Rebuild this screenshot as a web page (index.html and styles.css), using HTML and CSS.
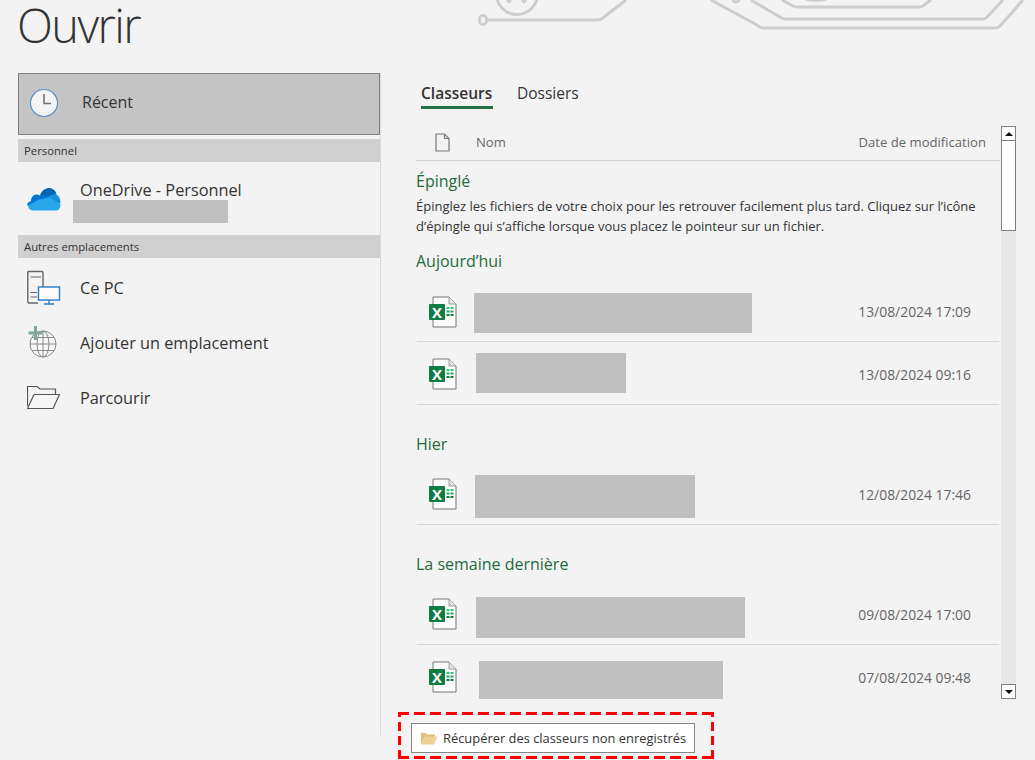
FILE: index.html
```html
<!DOCTYPE html>
<html lang="fr">
<head>
<meta charset="utf-8">
<title>Ouvrir</title>
<link rel="stylesheet" href="styles.css">
</head>
<body>
<svg class="circuit" width="595" height="40" viewBox="440 0 595 40" fill="none">
  <g stroke="#cdcdcd" stroke-width="3" stroke-linejoin="round">
    <path d="M488 20H597Q601 20 604 17L626 0"/>
    <rect x="479.500" y="15.500" width="7" height="9" rx="3.500"/>
    <circle cx="517" cy="-6" r="20.500"/>
    <path d="M711 0L757 25Q760 28 764 28H996Q998 28 1000 26L1023 0"/>
    <path d="M751 0L780 17Q782 19 785 19H983Q985 19 987 17L1003 0"/>
    <path d="M782 0L793 6Q795 7 798 7H920Q922 7 924 5L931 0"/>
    <circle cx="736" cy="-1" r="3"/>
    <path d="M800 -3Q816 4 832 -3"/>
    <path d="M507 0L509 2L511 0M522 0L524 2L526 0"/>
  </g>
</svg>

<h1 class="title">Ouvrir</h1>

<main class="layout">
  <nav class="nav">
    <a class="nav-recent">
      <svg class="ic-clock" width="30" height="30" viewBox="0 0 30 30">
        <circle cx="15" cy="15" r="13.500" fill="#f4f4f4" stroke="#5a8fcb" stroke-width="1.200"/>
        <path d="M15 6V15.500H22" fill="none" stroke="#6e6e6e" stroke-width="1.500"/>
      </svg>
      <span class="recent-label">Récent</span>
    </a>
    <div class="nav-section">Personnel</div>
    <a class="nav-onedrive">
      <svg class="ic-cloud" width="34" height="24" viewBox="0 0 34 24">
        <path d="M13 8.500C14.500 3 19 1 22 1C25.500 1 28.500 3.500 29.500 7L20 12Z" fill="#0364b8"/>
        <path d="M13 8.500C8.500 6 4 9 4 14C1.500 14.500 0 16.500 0 18.500L12 16L22 9Z" fill="#0078d4"/>
        <path d="M29 7.500C24 7 22 9 20 10.500L12 15.500L24 23L33.500 15.500C33.500 11 31 8 29 7.500Z" fill="#1490df"/>
        <path d="M12 12.500L1 18.500C1 21 3 23.500 6 23.500H29C31.500 23.500 33.500 21.500 33.500 17L22.500 10.500Z" fill="#28a8ea"/>
      </svg>
      <div class="onedrive-text">
        <span class="nav-label">OneDrive - Personnel</span>
        <div class="redact redact-account"></div>
      </div>
    </a>
    <div class="nav-section">Autres emplacements</div>
    <div class="nav-places">
      <a class="nav-item">
        <svg class="ic-place" width="36" height="36" viewBox="0 0 36 36">
          <path d="M11 33H1.500A1 1 0 0 1 .8 32V2.500A1 1 0 0 1 1.500 1.500H15A1 1 0 0 1 16 2.500V17" fill="#f4f4f4" stroke="#666" stroke-width="1.400"/>
          <path d="M3.500 7H14M3.500 22.500H10M3.500 27H10" stroke="#666" stroke-width="1"/>
          <rect x="11.500" y="17" width="21" height="13" fill="#fbfbfb" stroke="#2a7cc7" stroke-width="1.400"/>
          <path d="M22 30V34M17 34H27" stroke="#2a7cc7" stroke-width="1.300"/>
        </svg>
        <span class="nav-label">Ce PC</span>
      </a>
      <a class="nav-item">
        <svg class="ic-place" width="36" height="36" viewBox="0 0 36 36">
          <g fill="none" stroke="#8a8a8a" stroke-width="1">
            <circle cx="16" cy="19" r="13" fill="#f8f8f8"/>
            <ellipse cx="16" cy="19" rx="6" ry="13"/>
            <path d="M16 6V32M3 19H29M5 12.500H27M5 25.500H27"/>
          </g>
          <path d="M9 2H12V7.500H17.500V10.500H12V16H9V10.500H3.500V7.500H9Z" fill="#7fa99b" transform="translate(-2 -1)"/>
        </svg>
        <span class="nav-label">Ajouter un emplacement</span>
      </a>
      <a class="nav-item">
        <svg class="ic-place" width="36" height="36" viewBox="2 0 36 36">
          <path d="M2.500 26V6.500H12L15 9H30.500V14" fill="none" stroke="#555" stroke-width="1.200"/>
          <path d="M2.500 28.500H28L34.500 14.500H9Z" fill="#f6f6f6" stroke="#555" stroke-width="1.200" stroke-linejoin="round"/>
        </svg>
        <span class="nav-label">Parcourir</span>
      </a>
    </div>
  </nav>

  <section class="panel">
    <div class="tabs">
      <span class="tab tab-active">Classeurs</span>
      <span class="tab">Dossiers</span>
    </div>
    <div class="browser">
      <div class="list">
        <div class="list-head">
          <svg class="ic-file" width="15" height="19" viewBox="0 0 15 19">
            <path d="M1 1H9.500L14 5.500V18H1ZM9.500 1V5.500H14" fill="none" stroke="#777" stroke-width="1.200"/>
          </svg>
          <span class="head-name">Nom</span>
          <span class="head-date">Date de modification</span>
        </div>
        <h2 class="group group-pinned">Épinglé</h2>
        <p class="hint">Épinglez les fichiers de votre choix pour les retrouver facilement plus tard. Cliquez sur l’icône d’épingle qui s’affiche lorsque vous placez le pointeur sur un fichier.</p>
        <h2 class="group group-today">Aujourd’hui</h2>
        <div class="row row-a">
          <svg class="ic-xl" width="30" height="32"><use href="#xl"/></svg>
          <div class="redact redact-a"></div>
          <span class="date">13/08/2024 17:09</span>
        </div>
        <div class="row row-b">
          <svg class="ic-xl" width="30" height="32"><use href="#xl"/></svg>
          <div class="redact redact-b"></div>
          <span class="date">13/08/2024 09:16</span>
        </div>
        <h2 class="group group-next">Hier</h2>
        <div class="row row-c">
          <svg class="ic-xl" width="30" height="32"><use href="#xl"/></svg>
          <div class="redact redact-c"></div>
          <span class="date">12/08/2024 17:46</span>
        </div>
        <h2 class="group group-next">La semaine dernière</h2>
        <div class="row row-d">
          <svg class="ic-xl" width="30" height="32"><use href="#xl"/></svg>
          <div class="redact redact-d"></div>
          <span class="date">09/08/2024 17:00</span>
        </div>
        <div class="row row-e">
          <svg class="ic-xl" width="30" height="32"><use href="#xl"/></svg>
          <div class="redact redact-e"></div>
          <span class="date">07/08/2024 09:48</span>
        </div>
      </div>
      <div class="scrollbar">
        <div class="scroll-btn"><span class="arrow-up"></span></div>
        <div class="scroll-thumb"></div>
        <div class="scroll-track"></div>
        <div class="scroll-btn"><span class="arrow-down"></span></div>
      </div>
    </div>
    <div class="recover-wrap">
      <button class="recover" type="button">
        <svg width="18" height="14" viewBox="0 0 18 14">
          <path d="M1 13V2H6L7.500 3.500H15V6H5Z" fill="#e3bd7c"/>
          <path d="M1 13.500L4.500 5.500H17.500L14 13.500Z" fill="#f0cf94"/>
        </svg>
        <span>Récupérer des classeurs non enregistrés</span>
      </button>
    </div>
  </section>
</main>

<svg class="defs" width="0" height="0">
  <symbol id="xl" viewBox="0 0 30 32">
    <path d="M5 1H21L28 8V31H5Z" fill="#fbfbfb" stroke="#757575" stroke-width="1"/>
    <path d="M21 1V8H28" fill="#e4e4e4" stroke="#9a9a9a" stroke-width="1"/>
    <rect x="1" y="8" width="16" height="16" rx="1" fill="#107c41"/>
    <text x="9" y="21.500" class="xl-letter">X</text>
    <path d="M18.500 11H21.500V13H18.500ZM22.500 11H25.500V13H22.500Z" fill="#33c481"/>
    <path d="M18.500 14.500H21.500V16.500H18.500ZM22.500 14.500H25.500V16.500H22.500Z" fill="#21a366"/>
    <path d="M18.500 18H21.500V20H18.500ZM22.500 18H25.500V20H22.500Z" fill="#107c41"/>
  </symbol>
</svg>
```

FILE: styles.css
```css
* { box-sizing: border-box; }

html, body {
  margin: 0;
  height: 760px;
  overflow: hidden;
}

body {
  position: relative;
  background: #f3f3f3;
  color: #333;
  font-family: "Open Sans", "Noto Sans", sans-serif;
}

.circuit {
  position: absolute;
  top: 0;
  left: 440px;
}

.defs { position: absolute; }

.title {
  margin: 0 0 0 17px;
  height: 73px;
  font-size: 47px;
  line-height: 50px;
  font-weight: 300;
  letter-spacing: -1.600px;
  color: #333;
}

.layout {
  display: flex;
  height: 687px;
  padding-left: 18px;
}

/* left navigation */
.nav {
  width: 363px;
  height: 662px;
  border-right: 1px solid #dcdcdc;
  flex: none;
}

.nav-recent {
  display: flex;
  align-items: center;
  height: 62px;
  margin-bottom: 4px;
  padding: 0 0 2px 10px;
  gap: 23px;
  background: #c4c4c4;
  border: 1px solid #808080;
  font-size: 16px;
}

.recent-label { margin-bottom: 2px; }

.ic-clock { flex: none; }

.nav-section {
  height: 23px;
  padding-left: 6px;
  background: #d0d0d0;
  font-size: 11.300px;
  line-height: 23px;
}

.nav-onedrive {
  display: flex;
  height: 73px;
  padding: 16px 0 0 9px;
}

.ic-cloud { flex: none; margin-top: 9px; }

.onedrive-text {
  margin-left: 19px;
  margin-top: 1px;
}

.nav-label {
  display: block;
  font-size: 16.300px;
  line-height: 22px;
}

.redact { background: #bfbfbf; flex: none; }

.redact-account {
  width: 155px;
  height: 23px;
  margin-left: -7px;
  margin-top: -1px;
}

.nav-places { padding-top: 2px; }

.nav-item {
  display: flex;
  align-items: center;
  height: 55px;
  padding-left: 9px;
}

.ic-place { flex: none; margin-right: 17px; }

/* right panel */
.panel {
  flex: 1;
  min-width: 0;
  padding-left: 35px;
  display: flex;
  flex-direction: column;
}

.tabs {
  display: flex;
  gap: 24px;
  height: 52px;
  padding-left: 5px;
  padding-top: 8px;
}

.tab {
  height: 28px;
  font-size: 15.500px;
  line-height: 24px;
}

.tab-active {
  font-weight: 600;
  border-bottom: 3px solid #217346;
  width: 72px;
  white-space: nowrap;
}

.browser {
  display: flex;
  height: 575px;
  gap: 1px;
}

.list {
  width: 584px;
  flex: none;
  overflow: hidden;
}

.list-head {
  display: flex;
  align-items: center;
  height: 36px;
  border-bottom: 1px solid #d2d2d2;
  color: #666;
  font-size: 13.100px;
  padding: 0 14px 1px 19px;
}

.ic-file { flex: none; }

.head-name { margin: 0 0 1px 26px; }
.head-date { margin: 0 0 1px auto; }

.group {
  margin: 0;
  font-size: 16px;
  font-weight: 400;
  line-height: 22px;
  color: #1e6b3e;
}

.group-pinned { margin-top: 9px; }
.group-today { margin-top: 14px; }
.group-next { margin-top: 28px; }

.hint {
  margin: 4px 0 0;
  font-size: 13px;
  line-height: 20px;
  color: #333;
  width: 575px;
}

.row {
  display: flex;
  align-items: center;
  width: 582px;
  margin-left: 1px;
  padding-left: 11px;
  padding-right: 28px;
}

.row-a { height: 70px; padding-top: 12px; border-bottom: 1px solid #d8d8d8; }
.row-b { height: 63px; padding-top: 4px; border-bottom: 1px solid #d8d8d8; }
.row-c { height: 70px; padding-top: 11px; border-bottom: 1px solid #d8d8d8; }
.row-d { height: 70px; padding-top: 11px; border-bottom: 1px solid #d8d8d8; }
.row-e { height: 66px; }

.ic-xl { flex: none; margin-top: -2px; }

.redact-a { width: 278px; height: 40px; margin: 0 0 0 16px; }
.redact-b { width: 150px; height: 40px; margin: 0 0 4px 18px; }
.redact-c { width: 220px; height: 43px; margin: 3px 0 0 17px; }
.redact-d { width: 269px; height: 41px; margin: 5px 0 0 18px; }
.redact-e { width: 244px; height: 38px; margin: 4px 0 0 21px; }

.date {
  margin: -2px 0 0 auto;
  font-size: 13.900px;
  color: #666;
}

.xl-letter {
  font-family: "Open Sans", sans-serif;
  font-size: 15px;
  font-weight: 700;
  fill: #fff;
  text-anchor: middle;
}

/* scrollbar */
.scrollbar {
  width: 15px;
  height: 573px;
  margin-top: 1px;
  flex: none;
  display: flex;
  flex-direction: column;
  background: #e8e8e8;
}

.scroll-btn {
  height: 15px;
  background: #fff;
  border: 1px solid #808080;
  display: flex;
  align-items: center;
  justify-content: center;
  flex: none;
}

.scroll-thumb {
  height: 90px;
  background: #fff;
  border: 1px solid #808080;
  border-top-width: 0;
  flex: none;
}

.scroll-track { flex: 1; }

.arrow-up, .arrow-down {
  width: 0;
  height: 0;
  border-left: 4px solid transparent;
  border-right: 4px solid transparent;
}

.arrow-up { border-bottom: 4px solid #111; }
.arrow-down { border-top: 4px solid #111; }

/* recover button, with the red annotation around it */
.recover-wrap {
  width: 316px;
  height: 47px;
  margin-top: 12px;
  margin-left: -18px;
  padding: 11px 0 0 13px;
  background-image:
    repeating-linear-gradient(90deg, #f00 0 11px, transparent 11px 16px),
    repeating-linear-gradient(90deg, #f00 0 11px, transparent 11px 16px),
    repeating-linear-gradient(0deg, #f00 0 9px, transparent 9px 14px),
    repeating-linear-gradient(0deg, #f00 0 9px, transparent 9px 14px);
  background-size: 100% 3px, 100% 3px, 3px 100%, 3px 100%;
  background-position: 0 0, 0 100%, 0 0, 100% 0;
  background-repeat: no-repeat;
}

.recover {
  display: flex;
  align-items: center;
  gap: 5px;
  width: 284px;
  height: 30px;
  padding: 0 0 0 8px;
  background: #fff;
  border: 1px solid #858585;
  color: #333;
  font-family: inherit;
  font-size: 12.900px;
  white-space: nowrap;
}
```
